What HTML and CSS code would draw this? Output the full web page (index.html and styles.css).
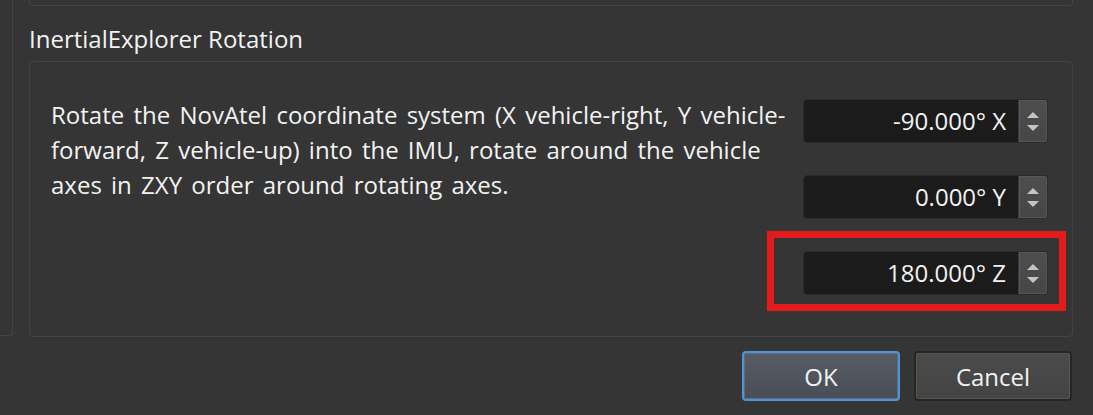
FILE: index.html
```html
<!DOCTYPE html>
<html>
<head>
<meta charset="utf-8">
<link rel="stylesheet" href="styles.css">
</head>
<body>
<div class="page">
  <div class="upper">
    <div class="side-frame"></div>
    <div class="main">
      <div class="prev-box"></div>
      <div class="group-title">InertialExplorer Rotation</div>
      <div class="group-box">
        <p class="desc">Rotate the NovAtel coordinate system (X vehicle-right, Y vehicle-forward, Z vehicle-up) into the IMU, rotate around the vehicle axes in ZXY order around rotating axes.</p>
        <div class="spins">
          <div class="spin">
            <div class="spin-value">-90.000° X</div>
            <div class="spin-btns"><span class="tri-up"></span><span class="tri-down"></span></div>
          </div>
          <div class="spin">
            <div class="spin-value">0.000° Y</div>
            <div class="spin-btns"><span class="tri-up"></span><span class="tri-down"></span></div>
          </div>
          <div class="spin spin-marked">
            <div class="spin-value">180.000° Z</div>
            <div class="spin-btns"><span class="tri-up"></span><span class="tri-down"></span></div>
            <div class="highlight"></div>
          </div>
        </div>
      </div>
    </div>
  </div>
  <div class="footer">
    <button class="btn btn-default">OK</button>
    <button class="btn">Cancel</button>
  </div>
</div>
</body>
</html>
```
FILE: styles.css
```css
html, body {
  margin: 0;
  padding: 0;
  background: #353535;
}
body {
  width: 1093px;
  height: 415px;
  overflow: hidden;
  font-family: "Open Sans", "Noto Sans", sans-serif;
  color: #f2f2f2;
}
.page {
  display: flex;
  flex-direction: column;
}
.upper {
  display: flex;
  height: 337px;
}
.side-frame {
  width: 13px;
  height: 336px;
  border-right: 1px solid #444444;
  border-bottom: 1px solid #444444;
  border-bottom-right-radius: 4px;
  box-sizing: border-box;
  flex: none;
}
.main {
  margin-left: 16px;
  width: 1044px;
  display: flex;
  flex-direction: column;
}
.prev-box {
  height: 6px;
  box-sizing: border-box;
  border: 1px solid #444444;
  border-top: none;
  border-bottom-left-radius: 4px;
  border-bottom-right-radius: 4px;
}
.group-title {
  font-size: 24px;
  line-height: 30px;
  margin-top: 18px;
  height: 37px;
}
.group-box {
  height: 276px;
  box-sizing: border-box;
  border: 1px solid #444444;
  border-radius: 4px;
  display: flex;
  justify-content: space-between;
  padding: 37px 24px 0 21px;
}
.desc {
  margin: 0;
  width: 745px;
  font-size: 24px;
  line-height: 35px;
  word-spacing: 3px;
  margin-top: -2px;
}
.spins {
  display: flex;
  flex-direction: column;
  gap: 32px;
  flex: none;
}
.spin {
  position: relative;
  width: 245px;
  height: 44px;
  display: flex;
  box-sizing: border-box;
  border: 1px solid #2b2b2b;
  border-radius: 4px;
  background: #1b1b1b;
}
.spin-value {
  flex: 1;
  text-align: right;
  font-size: 24px;
  line-height: 42px;
  padding-right: 12px;
}
.spin-btns {
  width: 28px;
  background: linear-gradient(#4e4e4e, #464646);
  border-left: 1px solid #3a3a3a;
  border-top-right-radius: 3px;
  border-bottom-right-radius: 3px;
  box-shadow: inset 0 0 0 1px #575757;
  display: flex;
  flex-direction: column;
  align-items: center;
  justify-content: center;
  gap: 7px;
}
.tri-up {
  width: 0;
  height: 0;
  border-left: 6px solid transparent;
  border-right: 6px solid transparent;
  border-bottom: 6px solid #c4c4c4;
}
.tri-down {
  width: 0;
  height: 0;
  border-left: 6px solid transparent;
  border-right: 6px solid transparent;
  border-top: 6px solid #c4c4c4;
}
.highlight {
  position: absolute;
  left: -37px;
  top: -21px;
  right: -19px;
  bottom: -17px;
  border: 7px solid #e21b1b;
  pointer-events: none;
}
.footer {
  display: flex;
  justify-content: flex-end;
  gap: 14px;
  padding-right: 21px;
  margin-top: 14px;
}
.btn {
  width: 158px;
  height: 50px;
  box-sizing: border-box;
  font-family: "Open Sans", "Noto Sans", sans-serif;
  font-size: 24px;
  color: #f2f2f2;
  background: linear-gradient(#4b4b4b, #444444);
  border: 2px solid #262626;
  border-radius: 4px;
  box-shadow: inset 0 0 0 1px #575757;
  padding: 0;
}
.btn-default {
  background: linear-gradient(#575c65, #484d56);
  border: 2px solid #4a94e0;
  box-shadow: inset 0 0 0 1px #646a74;
}
```
